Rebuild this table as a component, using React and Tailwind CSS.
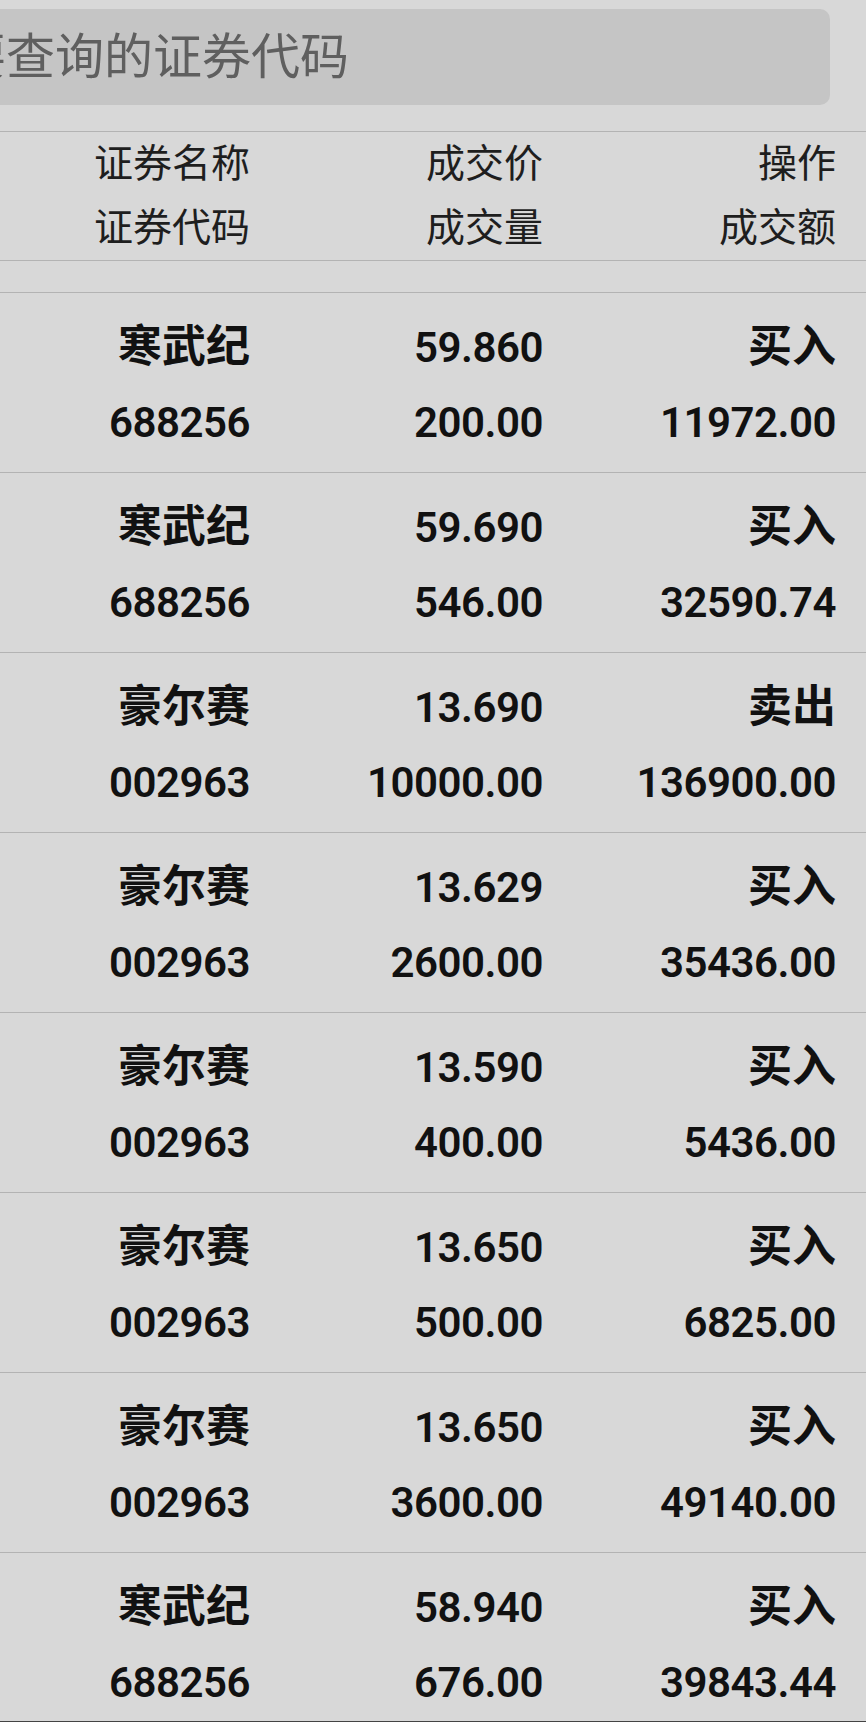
const trades = [
  { name: '寒武纪', code: '688256', price: '59.860', volume: '200.00', side: '买入', amount: '11972.00' },
  { name: '寒武纪', code: '688256', price: '59.690', volume: '546.00', side: '买入', amount: '32590.74' },
  { name: '豪尔赛', code: '002963', price: '13.690', volume: '10000.00', side: '卖出', amount: '136900.00' },
  { name: '豪尔赛', code: '002963', price: '13.629', volume: '2600.00', side: '买入', amount: '35436.00' },
  { name: '豪尔赛', code: '002963', price: '13.590', volume: '400.00', side: '买入', amount: '5436.00' },
  { name: '豪尔赛', code: '002963', price: '13.650', volume: '500.00', side: '买入', amount: '6825.00' },
  { name: '豪尔赛', code: '002963', price: '13.650', volume: '3600.00', side: '买入', amount: '49140.00' },
  { name: '寒武纪', code: '688256', price: '58.940', volume: '676.00', side: '买入', amount: '39843.44' }
]

const font = "font-['Roboto','Noto_Sans_CJK_SC',sans-serif]"

// text classes for the two kinds of data text
const cjk = 'text-[44px] font-bold'
const num = 'text-[42px] font-semibold tracking-[-0.5px]'

function Cell({ top, bottom, topClass = '', bottomClass = '' }) {
  return (
    <div className="flex flex-col items-end">
      <span className={topClass}>{top}</span>
      <span className={bottomClass}>{bottom}</span>
    </div>
  )
}

export default function App() {
  return (
    <div className={`w-[866px] h-[1722px] overflow-hidden flex flex-col bg-[#d8d8d8] ${font}`}>
      {/* Search */}
      <div className="pt-[9px] pb-[26px] shrink-0">
        <div className="ml-[-200px] w-[1030px] h-[96px] rounded-[10px] bg-[#c5c5c5] flex items-center pl-[10px] overflow-hidden">
          <span className="text-[49px] text-[#5f5f5f] whitespace-nowrap leading-none">请输入要查询的证券代码</span>
        </div>
      </div>

      {/* Header */}
      <div className="shrink-0 border-y border-[#b3b3b3] grid grid-cols-[250px_293px_293px] pr-[30px] text-[39px] leading-[64px] text-[#1e1e1e]">
        <Cell top="证券名称" bottom="证券代码" />
        <Cell top="成交价" bottom="成交量" />
        <Cell top="操作" bottom="成交额" />
      </div>

      <div className="shrink-0 h-[32px] border-b border-[#b3b3b3]" />

      {/* Trades */}
      <div className="flex-1 overflow-hidden">
        {trades.map((t, i) => (
          <div
            key={i}
            className="grid grid-cols-[250px_293px_293px] pr-[30px] pt-[17px] pb-[12px] border-b border-[#b3b3b3] leading-[75px] text-[#111]"
          >
            <Cell top={t.name} bottom={t.code} topClass={cjk} bottomClass={num} />
            <Cell top={t.price} bottom={t.volume} topClass={num} bottomClass={num} />
            <Cell top={t.side} bottom={t.amount} topClass={cjk} bottomClass={num} />
          </div>
        ))}
      </div>
      <div className="shrink-0 h-px bg-[#444]" />
    </div>
  )
}
